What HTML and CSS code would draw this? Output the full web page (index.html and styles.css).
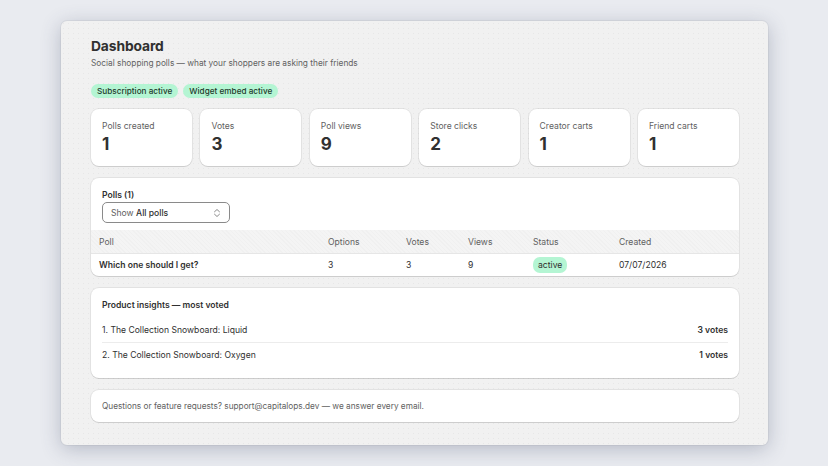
FILE: index.html
```html
<!DOCTYPE html>
<html lang="en">
<head>
<meta charset="utf-8">
<title>Dashboard</title>
<link rel="stylesheet" href="styles.css">
</head>
<body>
<div class="window">
  <header class="head">
    <h1 class="title">Dashboard</h1>
    <p class="subtitle">Social shopping polls — what your shoppers are asking their friends</p>
  </header>
  <div class="pills">
    <span class="pill">Subscription active</span>
    <span class="pill">Widget embed active</span>
  </div>
  <div class="stats">
    <div class="card stat"><div class="stat-label">Polls created</div><div class="stat-value">1</div></div>
    <div class="card stat"><div class="stat-label">Votes</div><div class="stat-value">3</div></div>
    <div class="card stat"><div class="stat-label">Poll views</div><div class="stat-value">9</div></div>
    <div class="card stat"><div class="stat-label">Store clicks</div><div class="stat-value">2</div></div>
    <div class="card stat"><div class="stat-label">Creator carts</div><div class="stat-value">1</div></div>
    <div class="card stat"><div class="stat-label">Friend carts</div><div class="stat-value">1</div></div>
  </div>
  <section class="card polls">
    <div class="polls-head">
      <div class="card-title">Polls (1)</div>
      <div class="select">
        <span class="select-text">Show <b>All polls</b></span>
        <svg class="chev" width="8" height="10" viewBox="0 0 8 10"><path d="M1.5 3.8 4 1.5 6.5 3.8M1.5 6.2 4 8.5 6.5 6.2" fill="none" stroke="#8a8a8a" stroke-width="1" stroke-linecap="round" stroke-linejoin="round"/></svg>
      </div>
    </div>
    <div class="table">
      <div class="tr th">
        <div class="c c-poll">Poll</div>
        <div class="c c-opt">Options</div>
        <div class="c c-votes">Votes</div>
        <div class="c c-views">Views</div>
        <div class="c c-status">Status</div>
        <div class="c c-created">Created</div>
      </div>
      <div class="tr td">
        <div class="c c-poll strong">Which one should I get?</div>
        <div class="c c-opt">3</div>
        <div class="c c-votes">3</div>
        <div class="c c-views">9</div>
        <div class="c c-status"><span class="badge">active</span></div>
        <div class="c c-created">07/07/2026</div>
      </div>
    </div>
  </section>
  <section class="card insights">
    <div class="card-title">Product insights — most voted</div>
    <div class="ins-row"><span>1. The Collection Snowboard: Liquid</span><span class="strong">3 votes</span></div>
    <div class="ins-row"><span>2. The Collection Snowboard: Oxygen</span><span class="strong">1 votes</span></div>
  </section>
  <footer class="card foot">Questions or feature requests? support@capitalops.dev — we answer every email.</footer>
</div>
</body>
</html>
```
FILE: styles.css
```css
* { box-sizing: border-box; }
html, body { margin: 0; padding: 0; }
body {
  background: #e9ebf0;
  font-family: Inter, "Noto Sans", sans-serif;
  color: #303030;
  width: 828px;
  height: 466px;
  overflow: hidden;
}
.window {
  margin: 21px 60px 0 61px;
  width: 707px;
  height: 424px;
  border-radius: 6px;
  background-color: #f1f1f1;
  background-image: radial-gradient(circle, #e7e7e7 0.5px, transparent 0.7px);
  background-size: 5px 5px;
  box-shadow: 0 4px 20px rgba(60, 70, 100, 0.3), 0 0 0 1px rgba(0,0,0,0.04);
  padding: 16px 29px 0 30px;
  display: flex;
  flex-direction: column;
}
.title {
  margin: 0;
  font-size: 13.8px;
  line-height: 18px;
  font-weight: 700;
  letter-spacing: -0.1px;
}
.subtitle {
  margin: 1px 0 0;
  font-size: 8.3px;
  line-height: 14px;
  color: #616161;
}
.pills {
  display: flex;
  gap: 5px;
  margin-top: 14px;
}
.pill {
  background: #b4f5d3;
  border-radius: 7px;
  font-size: 8.2px;
  line-height: 14px;
  height: 14px;
  padding: 0 6px;
  color: #1f3a2c;
  font-weight: 500;
}
.stats {
  display: grid;
  grid-template-columns: repeat(6, 1fr);
  gap: 8.4px;
  margin-top: 11px;
}
.card {
  background: #fff;
  border-radius: 8px;
  box-shadow: 0 1px 0 rgba(0,0,0,0.09), 0 0 0 1px rgba(0,0,0,0.06);
}
.stat {
  height: 57px;
  padding: 11px 11px 0;
}
.stat-label {
  font-size: 8.6px;
  line-height: 12px;
  color: #616161;
}
.stat-value {
  font-size: 17px;
  line-height: 22px;
  font-weight: 700;
  margin-top: 1px;
}
.polls {
  margin-top: 12px;
  height: 98px;
  overflow: hidden;
}
.polls-head {
  padding: 11px 11px 0;
}
.card-title {
  font-size: 8.6px;
  line-height: 12px;
  font-weight: 600;
}
.select {
  margin-top: 1px;
  width: 128px;
  height: 21px;
  border: 1px solid #8a8a8a;
  border-radius: 5px;
  display: flex;
  align-items: center;
  justify-content: space-between;
  padding: 0 8px 0 8px;
  font-size: 8.6px;
  color: #616161;
}
.select b { color: #303030; font-weight: 500; }
.table { margin-top: 7px; }
.tr {
  display: flex;
  align-items: center;
  font-size: 8.6px;
}
.th {
  height: 24px;
  background-color: #f4f4f4;
  background-image: repeating-linear-gradient(45deg, rgba(0,0,0,0.014) 0 1px, transparent 1px 3px);
  color: #616161;
  border-bottom: 1px solid #e6e6e6;
}
.td { height: 22px; }
.c { flex: none; }
.c-poll { width: 237px; padding-left: 8px; }
.c-opt { width: 78px; }
.c-votes { width: 62px; }
.c-views { width: 65px; }
.c-status { width: 86px; }
.c-created { flex: 1; }
.strong { font-weight: 600; color: #303030; }
.badge {
  background: #b4f5d3;
  border-radius: 7px;
  padding: 1px 5px;
  line-height: 14px;
  display: inline-block;
}
.insights {
  margin-top: 12px;
  height: 90px;
  padding: 11px 11px 0;
}
.ins-row {
  display: flex;
  justify-content: space-between;
  align-items: center;
  height: 25px;
  font-size: 8.6px;
}
.insights .card-title { margin-bottom: 6px; }
.ins-row + .ins-row { border-top: 1px solid #ececec; }
.foot {
  margin-top: 12px;
  height: 32px;
  padding: 0 11px;
  display: flex;
  align-items: center;
  font-size: 8.25px;
  color: #616161;
}
```
